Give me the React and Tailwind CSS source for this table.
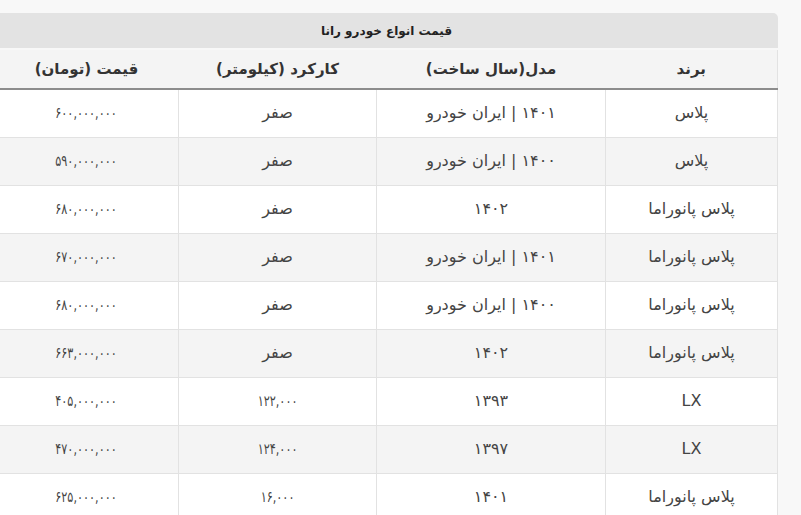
const rows = [
  ['پلاس', '۱۴۰۱ | ایران خودرو', 'صفر', '۶۰۰,۰۰۰,۰۰۰'],
  ['پلاس', '۱۴۰۰ | ایران خودرو', 'صفر', '۵۹۰,۰۰۰,۰۰۰'],
  ['پلاس پانوراما', '۱۴۰۲', 'صفر', '۶۸۰,۰۰۰,۰۰۰'],
  ['پلاس پانوراما', '۱۴۰۱ | ایران خودرو', 'صفر', '۶۷۰,۰۰۰,۰۰۰'],
  ['پلاس پانوراما', '۱۴۰۰ | ایران خودرو', 'صفر', '۶۸۰,۰۰۰,۰۰۰'],
  ['پلاس پانوراما', '۱۴۰۲', 'صفر', '۶۶۳,۰۰۰,۰۰۰'],
  ['LX', '۱۳۹۳', '۱۲۲,۰۰۰', '۴۰۵,۰۰۰,۰۰۰'],
  ['LX', '۱۳۹۷', '۱۲۴,۰۰۰', '۴۷۰,۰۰۰,۰۰۰'],
  ['پلاس پانوراما', '۱۴۰۱', '۱۶,۰۰۰', '۶۲۵,۰۰۰,۰۰۰'],
];

const headers = ['برند', 'مدل(سال ساخت)', 'کارکرد (کیلومتر)', 'قیمت (تومان)'];

// grouped numbers: DejaVu's Persian digits and commas run wide, squeeze them
const isGrouped = (s) => /^[۰-۹]+,[۰-۹,]+$/.test(s);

export default function App() {
  return (
    <div className="h-[515px] w-[801px] overflow-hidden bg-[#f8f8f8] pt-[13px] font-['DejaVu_Sans',sans-serif]">
      <div dir="rtl" className="-ml-[5px] w-[783px]">
        <div className="flex h-[35px] items-center justify-center rounded-tr-[5px] bg-[#e3e3e3] text-[12px] font-bold text-[#222]">
          قیمت انواع خودرو رانا
        </div>
        <table className="mt-[2px] w-full table-fixed border-collapse border-r border-[#e2e2e2] bg-white">
          <colgroup>
            <col className="w-[172px]" />
            <col className="w-[229px]" />
            <col className="w-[198px]" />
            <col className="w-[184px]" />
          </colgroup>
          <thead>
            <tr className="h-[39px] bg-[#f4f4f4]">
              {headers.map((h) => (
                <th key={h} className="border-b-2 border-[#8c8c8c] text-center text-[15px] font-bold text-[#333]">
                  {h}
                </th>
              ))}
            </tr>
          </thead>
          <tbody>
            {rows.map((r, i) => (
              <tr key={i} className={`h-[48px] ${i % 2 ? 'bg-[#f4f4f4]' : 'bg-white'}`}>
                {r.map((c, j) => (
                  <td key={j} className="border-b border-l border-[#e2e2e2] text-center text-[16px] text-[#444]">
                    {isGrouped(c) ? (
                      <span className="inline-block scale-x-[0.75] text-[15px]">{c}</span>
                    ) : (
                      c
                    )}
                  </td>
                ))}
              </tr>
            ))}
          </tbody>
        </table>
      </div>
    </div>
  );
}
